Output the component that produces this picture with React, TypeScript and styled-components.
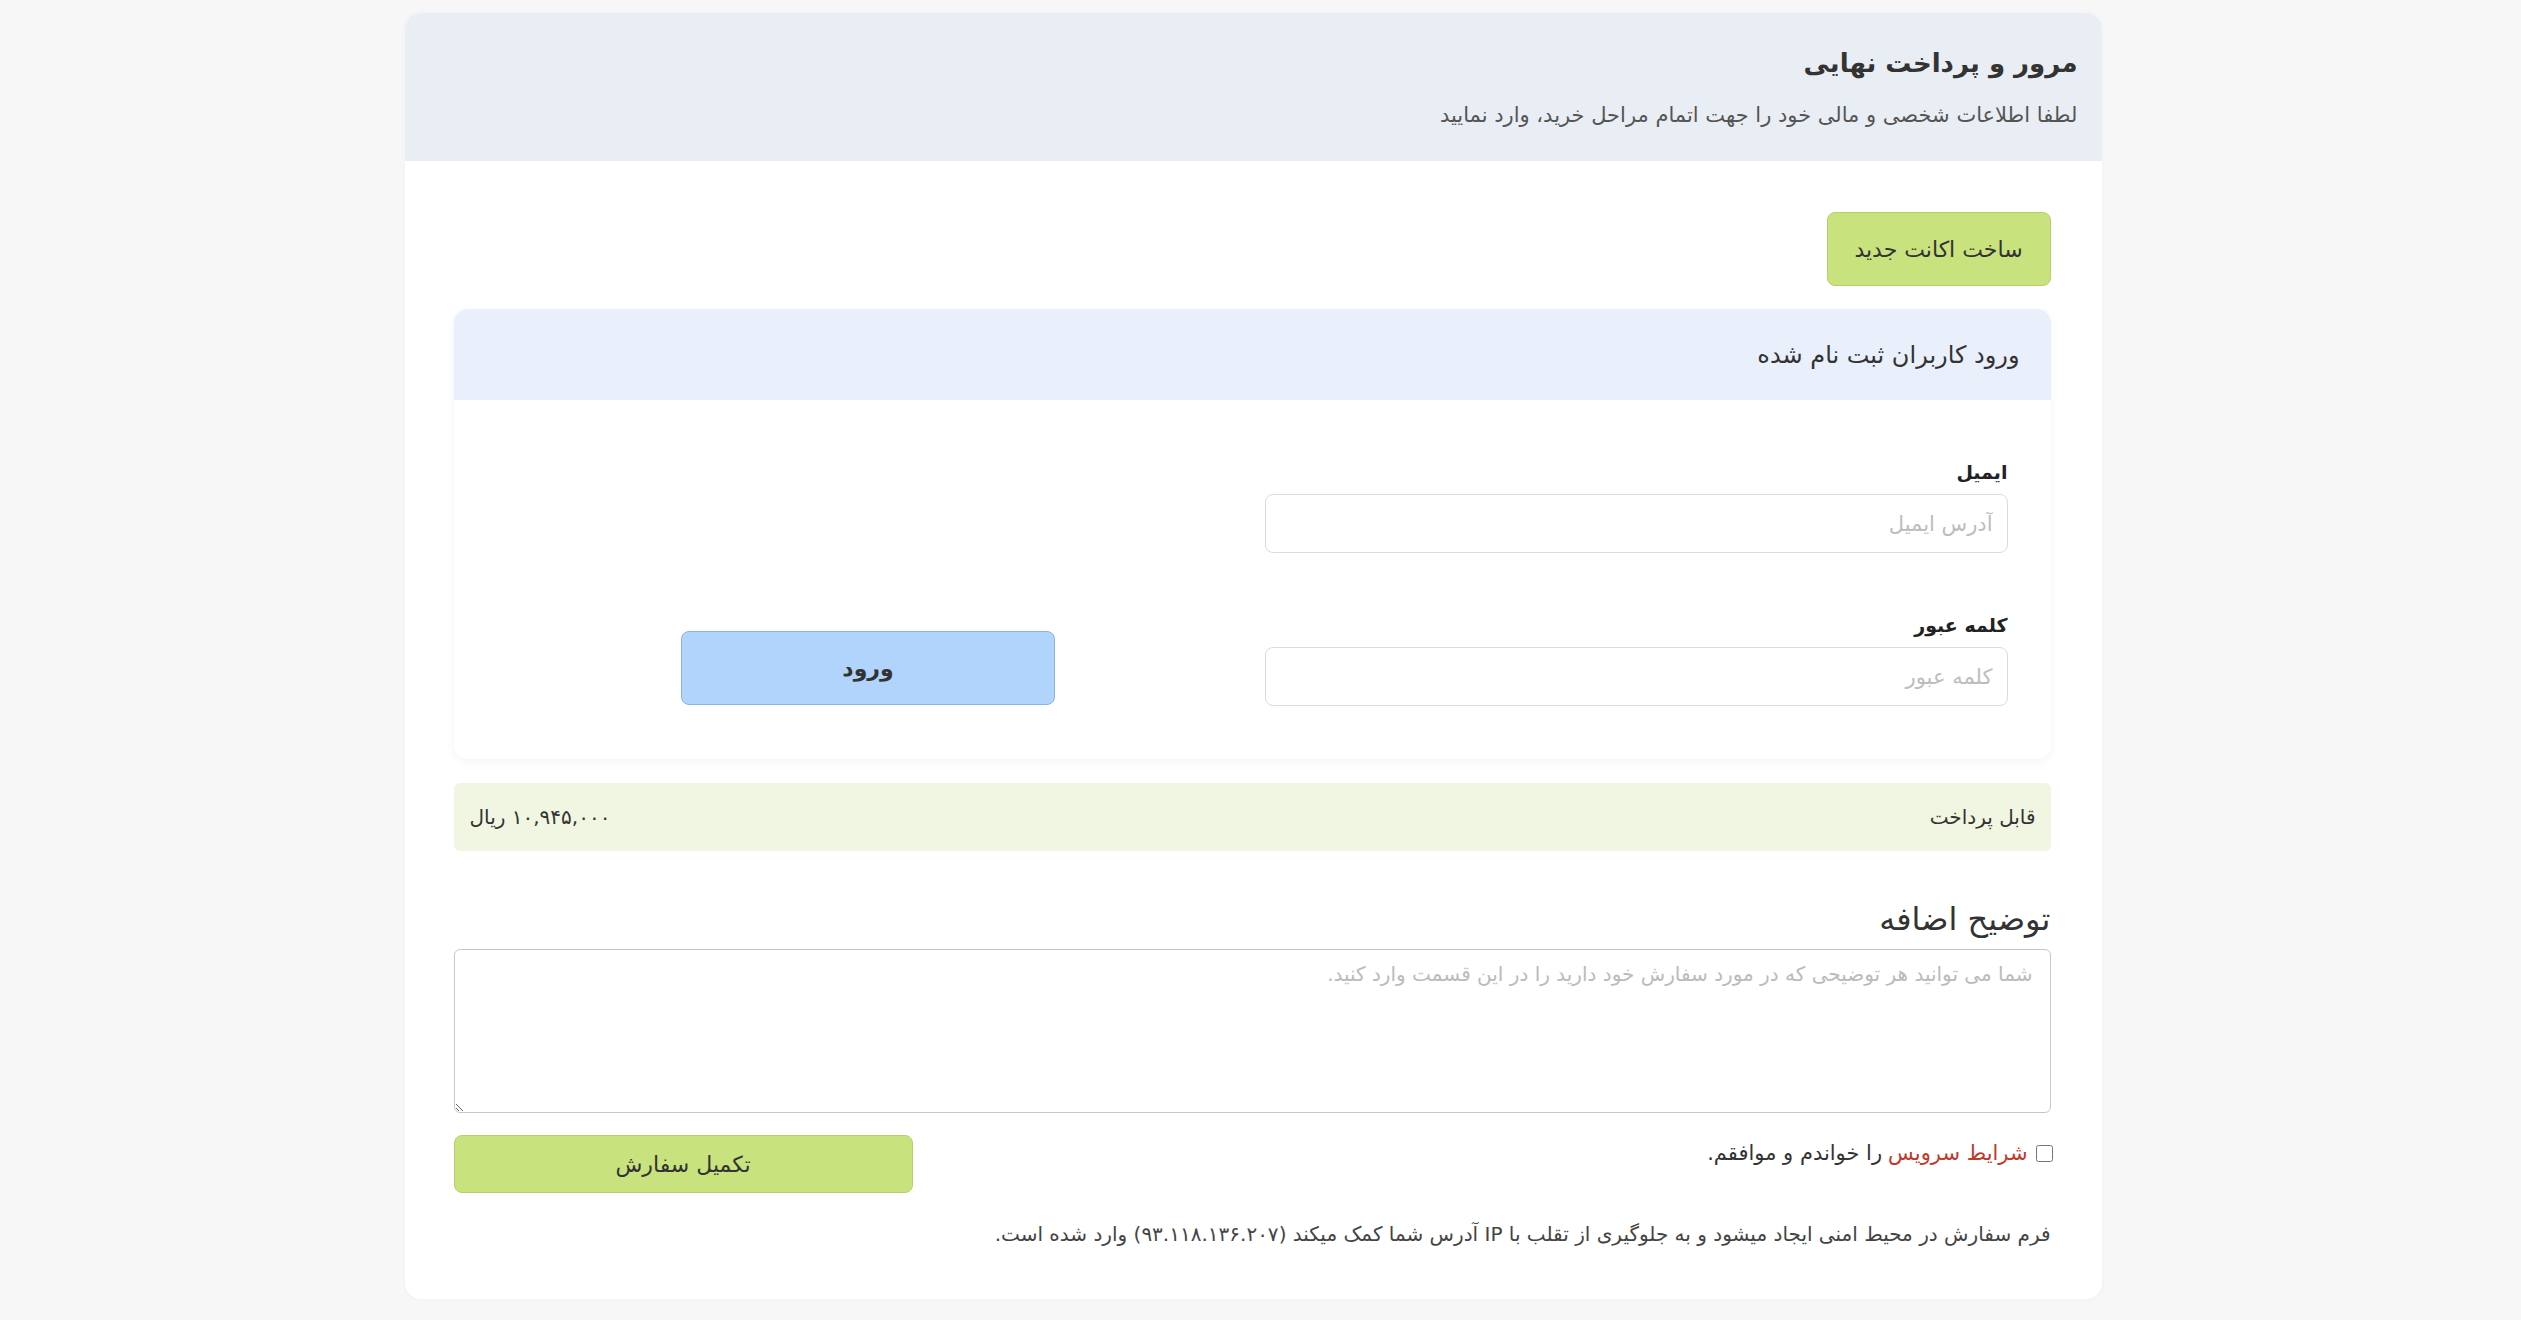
import React from 'react';
import styled, { createGlobalStyle } from 'styled-components';

const GlobalStyle = createGlobalStyle`
    html, body {
        margin: 0;
        padding: 0;
        background: #f7f7f7;
    }
    body {
        font-family: 'DejaVu Sans', 'Noto Sans', sans-serif;
        color: #333;
    }
`;

export default function App() {
    return (
        <>
            <GlobalStyle />
            <Page>
                <Card dir="rtl">
                    <Header>
                        <Title>مرور و پرداخت نهایی</Title>
                        <Subtitle>لطفا اطلاعات شخصی و مالی خود را جهت اتمام مراحل خرید، وارد نمایید</Subtitle>
                    </Header>
                    <Body>
                        <TopRow>
                            <Button $variant="green" $width={224} $height={74}>
                                ساخت اکانت جدید
                            </Button>
                        </TopRow>
                        <LoginCard>
                            <LoginHeader>ورود کاربران ثبت نام شده</LoginHeader>
                            <LoginBody>
                                <Fields>
                                    <Field>
                                        <Label>ایمیل</Label>
                                        <Input placeholder="آدرس ایمیل" />
                                    </Field>
                                    <Field>
                                        <Label>کلمه عبور</Label>
                                        <Input type="text" placeholder="کلمه عبور" />
                                    </Field>
                                </Fields>
                                <ButtonCol>
                                    <Button $variant="blue" $width={374} $height={74} $bold>
                                        ورود
                                    </Button>
                                </ButtonCol>
                            </LoginBody>
                        </LoginCard>
                        <PayBar>
                            <span>قابل پرداخت</span>
                            <span>۱۰,۹۴۵,۰۰۰ ریال</span>
                        </PayBar>
                        <SectionTitle>توضیح اضافه</SectionTitle>
                        <TextArea placeholder="شما می توانید هر توضیحی که در مورد سفارش خود دارید را در این قسمت وارد کنید." />
                        <SubmitRow>
                            <CheckLabel>
                                <CheckBox type="checkbox" />
                                <Terms>شرایط سرویس</Terms>
                                <span>را خواندم و موافقم.</span>
                            </CheckLabel>
                            <Button $variant="green" $width={459} $height={58}>
                                تکمیل سفارش
                            </Button>
                        </SubmitRow>
                        <Note>
                            فرم سفارش در محیط امنی ایجاد میشود و به جلوگیری از تقلب با IP آدرس شما کمک میکند (۹۳.۱۱۸.۱۳۶.۲۰۷) وارد شده است.
                        </Note>
                    </Body>
                </Card>
            </Page>
        </>
    );
}

const Page = styled.div`
    display: flex;
    justify-content: center;
    padding: 13px 15px 0 0;
    min-height: 1320px;
    box-sizing: border-box;
`;

const Card = styled.div`
    width: 1697px;
    height: 1286px;
    background: #fff;
    border-radius: 16px;
    overflow: hidden;
    box-shadow: 0 0 6px rgba(0, 0, 0, 0.03);
`;

const Header = styled.div`
    height: 148px;
    background: #e9eef4;
    padding: 0 24px;
    display: flex;
    flex-direction: column;
    justify-content: center;
    gap: 20px;
    box-sizing: border-box;
`;

const Title = styled.h1`
    margin: 0;
    font-size: 26px;
    font-weight: 700;
    color: #333;
    line-height: 36px;
`;

const Subtitle = styled.p`
    margin: 0;
    font-size: 21px;
    color: #555;
    line-height: 28px;
`;

const Body = styled.div`
    padding: 51px 51px 0 49px;
    display: flex;
    flex-direction: column;
`;

const TopRow = styled.div`
    display: flex;
`;

const Button = styled.button<{ $variant: 'green' | 'blue'; $width: number; $height: number; $bold?: boolean }>`
    width: ${(p) => p.$width}px;
    height: ${(p) => p.$height}px;
    border-radius: 8px;
    font-family: inherit;
    font-size: 22px;
    font-weight: ${(p) => (p.$bold ? 700 : 400)};
    color: #333;
    cursor: pointer;
    background: ${(p) => (p.$variant === 'green' ? '#c8e27e' : '#b0d4fb')};
    border: 1px solid ${(p) => (p.$variant === 'green' ? '#b5cf6c' : '#8cb4e2')};
`;

const LoginCard = styled.div`
    margin-top: 23px;
    height: 450px;
    border-radius: 14px;
    overflow: hidden;
    background: #fff;
    box-shadow: 0 2px 10px rgba(0, 0, 0, 0.05);
`;

const LoginHeader = styled.div`
    height: 91px;
    background: #e9f0fb;
    padding: 0 31px;
    display: flex;
    align-items: center;
    font-size: 24px;
    color: #333;
`;

const LoginBody = styled.div`
    display: grid;
    grid-template-columns: 743px 1fr;
    column-gap: 60px;
    padding: 58px 43px 0 30px;
`;

const Fields = styled.div`
    display: flex;
    flex-direction: column;
    gap: 58px;
`;

const Field = styled.div`
    display: flex;
    flex-direction: column;
    gap: 8px;
`;

const Label = styled.label`
    font-size: 19px;
    font-weight: 700;
    color: #222;
    line-height: 28px;
`;

const Input = styled.input`
    height: 59px;
    box-sizing: border-box;
    border: 1px solid #dcdcdc;
    border-radius: 8px;
    padding: 0 14px;
    font-family: inherit;
    font-size: 21px;
    color: #333;
    &::placeholder {
        color: #bdbdbd;
    }
    &:focus {
        outline: none;
    }
`;

const ButtonCol = styled.div`
    display: flex;
    align-items: flex-end;
    justify-content: center;
    padding-left: 48px;
    padding-bottom: 1px;
`;

const PayBar = styled.div`
    margin-top: 24px;
    height: 68px;
    background: #f0f6e1;
    border-radius: 6px;
    display: flex;
    align-items: center;
    justify-content: space-between;
    padding: 0 15px 0 16px;
    font-size: 20px;
    color: #333;
`;

const SectionTitle = styled.h2`
    margin: 48px 0 0;
    font-size: 32px;
    font-weight: 400;
    color: #333;
    line-height: 40px;
`;

const TextArea = styled.textarea`
    margin-top: 10px;
    height: 164px;
    box-sizing: border-box;
    border: 1px solid #c8c8c8;
    border-radius: 6px;
    padding: 12px 17px;
    font-family: inherit;
    font-size: 20px;
    resize: vertical;
    &::placeholder {
        color: #bbb;
    }
    &:focus {
        outline: none;
    }
`;

const SubmitRow = styled.div`
    margin-top: 22px;
    display: flex;
    justify-content: space-between;
    align-items: flex-start;
`;

const CheckLabel = styled.label`
    display: flex;
    align-items: center;
    gap: 6px;
    margin-top: 6px;
    font-size: 21px;
    color: #333;
    margin-right: -2px;
`;

const CheckBox = styled.input`
    width: 17px;
    height: 17px;
    margin: 0 0 0 2px;
`;

const Terms = styled.span`
    color: #c0392b;
`;

const Note = styled.p`
    margin: 28px 0 0;
    font-size: 20px;
    color: #444;
    line-height: 26px;
`;
